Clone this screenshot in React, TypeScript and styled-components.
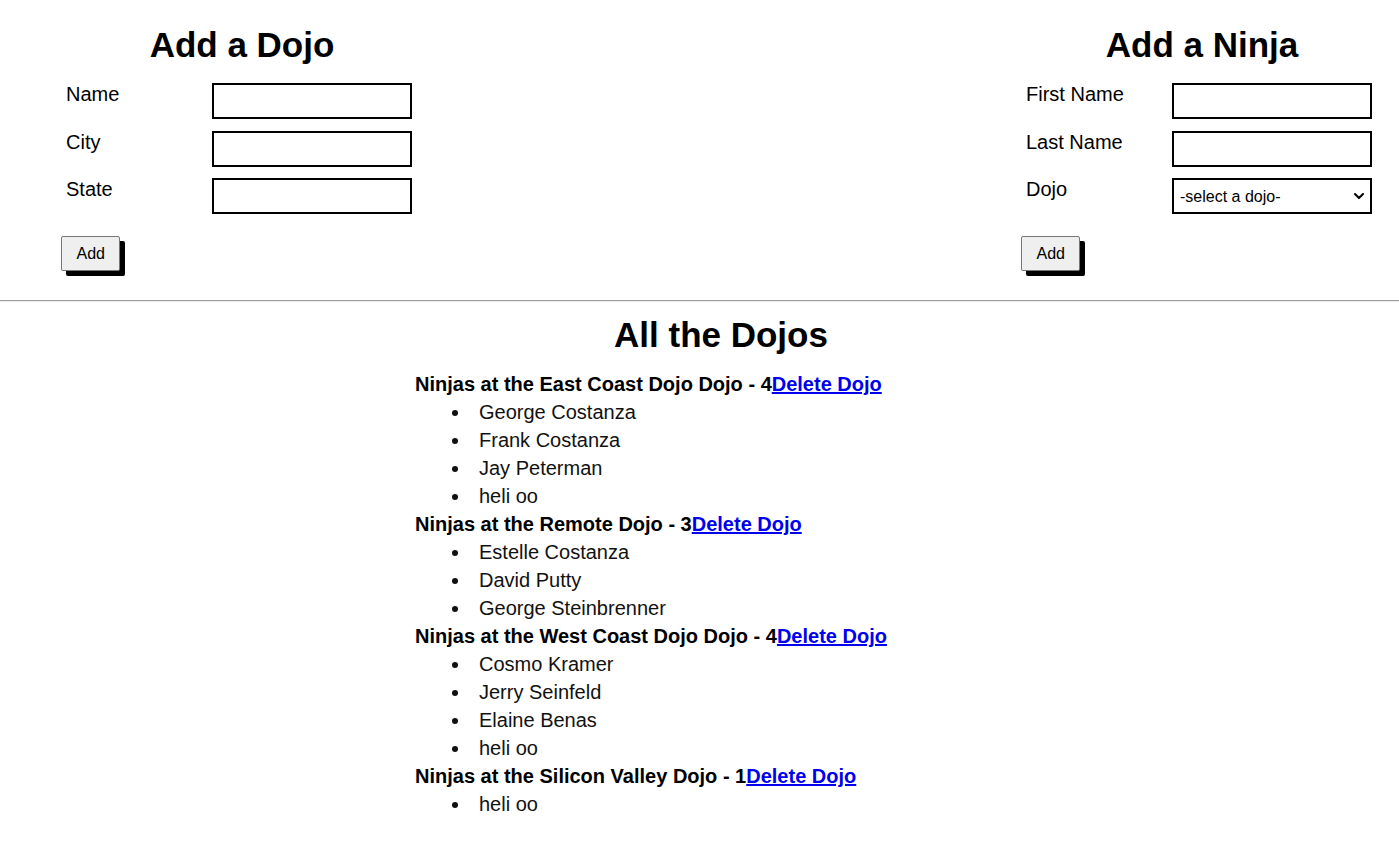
import React from "react";
import styled, { createGlobalStyle } from "styled-components";

const GlobalStyle = createGlobalStyle`
  html, body {
    margin: 0;
    padding: 0;
    background: #ffffff;
    font-family: "Liberation Sans", Arial, sans-serif;
    color: #000;
  }
`;

const Page = styled.div`
  width: 1399px;
  min-height: 867px;
`;

const TopBar = styled.div`
  display: flex;
  justify-content: space-between;
  padding: 25px 11px 29px 56px;
`;

const FormSection = styled.section`
  width: 372px;
  display: flex;
  flex-direction: column;
`;

const Title = styled.h1`
  margin: 0;
  font-size: 35px;
  font-weight: bold;
  text-align: center;
  line-height: 40px;
`;

const Form = styled.form`
  display: flex;
  flex-direction: column;
  gap: 11.5px;
  margin-top: 18px;
  padding-left: 5px;
`;

const Row = styled.div`
  display: grid;
  grid-template-columns: 151px 200px;
  align-items: start;
`;

const Label = styled.label`
  font-size: 20px;
  line-height: 23px;
  padding-left: 5px;
`;

const TextInput = styled.input`
  box-sizing: border-box;
  width: 200px;
  height: 36px;
  border: 2px solid #000;
  border-radius: 0;
  background: #fff;
  margin: 0;
  padding: 0 6px;
  font-size: 16px;
  font-family: "Liberation Sans", Arial, sans-serif;
`;

const SelectWrap = styled.div`
  position: relative;
  width: 200px;
  height: 36px;
`;

const Select = styled.select`
  box-sizing: border-box;
  appearance: none;
  -webkit-appearance: none;
  width: 200px;
  height: 36px;
  border: 2px solid #000;
  border-radius: 0;
  background: #fff;
  margin: 0;
  padding: 0 6px;
  font-size: 16px;
  font-family: "Liberation Sans", Arial, sans-serif;
  color: #000;
`;

const Chevron = styled.svg`
  position: absolute;
  right: 8px;
  top: 15px;
  pointer-events: none;
`;

const AddButton = styled.button`
  align-self: flex-start;
  margin-top: 10.5px;
  height: 35px;
  padding: 0 14.5px;
  background: #efefef;
  border: 1px solid #767676;
  border-radius: 2px;
  box-shadow: 5px 5px 0 #000;
  font-size: 16px;
  font-family: "Liberation Sans", Arial, sans-serif;
  color: #000;
`;

const Divider = styled.hr`
  margin: 0;
  border: none;
  border-top: 1px solid #9a9a9a;
  border-bottom: 1px solid #eeeeee;
`;

const ListSection = styled.section`
  margin-left: 415px;
  width: 612px;
  padding-top: 13px;
`;

const ListTitle = styled(Title)`
  margin-bottom: 15px;
`;

const DojoHeading = styled.div`
  font-size: 20px;
  font-weight: bold;
  line-height: 28px;
`;

const DeleteLink = styled.a`
  color: #0000ee;
  text-decoration: underline;
  cursor: pointer;
`;

const NinjaList = styled.ul`
  margin: 0;
  padding-left: 37px;
  list-style: disc inside;
`;

const NinjaItem = styled.li`
  font-size: 20px;
  line-height: 28px;
  color: #111;
`;

const dojos = [
  {
    name: "East Coast Dojo Dojo",
    ninjas: ["George Costanza", "Frank Costanza", "Jay Peterman", "heli oo"],
  },
  {
    name: "Remote Dojo",
    ninjas: ["Estelle Costanza", "David Putty", "George Steinbrenner"],
  },
  {
    name: "West Coast Dojo Dojo",
    ninjas: ["Cosmo Kramer", "Jerry Seinfeld", "Elaine Benas", "heli oo"],
  },
  {
    name: "Silicon Valley Dojo",
    ninjas: ["heli oo"],
  },
];

export default function App() {
  return (
    <Page>
      <GlobalStyle />
      <TopBar>
        <FormSection>
          <Title>Add a Dojo</Title>
          <Form onSubmit={(e) => e.preventDefault()}>
            <Row>
              <Label>Name</Label>
              <TextInput type="text" />
            </Row>
            <Row>
              <Label>City</Label>
              <TextInput type="text" />
            </Row>
            <Row>
              <Label>State</Label>
              <TextInput type="text" />
            </Row>
            <AddButton type="submit">Add</AddButton>
          </Form>
        </FormSection>
        <FormSection>
          <Title>Add a Ninja</Title>
          <Form onSubmit={(e) => e.preventDefault()}>
            <Row>
              <Label>First Name</Label>
              <TextInput type="text" />
            </Row>
            <Row>
              <Label>Last Name</Label>
              <TextInput type="text" />
            </Row>
            <Row>
              <Label>Dojo</Label>
              <SelectWrap>
                <Select defaultValue="">
                  <option value="">-select a dojo-</option>
                  {dojos.map((d) => (
                    <option key={d.name} value={d.name}>
                      {d.name}
                    </option>
                  ))}
                </Select>
                <Chevron width="10" height="6" viewBox="0 0 10 6">
                  <path
                    d="M1 1 L5 5 L9 1"
                    fill="none"
                    stroke="#000"
                    strokeWidth="2"
                    strokeLinecap="round"
                    strokeLinejoin="round"
                  />
                </Chevron>
              </SelectWrap>
            </Row>
            <AddButton type="submit">Add</AddButton>
          </Form>
        </FormSection>
      </TopBar>
      <Divider />
      <ListSection>
        <ListTitle>All the Dojos</ListTitle>
        {dojos.map((d) => (
          <div key={d.name}>
            <DojoHeading>
              Ninjas at the {d.name} - {d.ninjas.length}
              <DeleteLink>Delete Dojo</DeleteLink>
            </DojoHeading>
            <NinjaList>
              {d.ninjas.map((n, i) => (
                <NinjaItem key={i}>{n}</NinjaItem>
              ))}
            </NinjaList>
          </div>
        ))}
      </ListSection>
    </Page>
  );
}
